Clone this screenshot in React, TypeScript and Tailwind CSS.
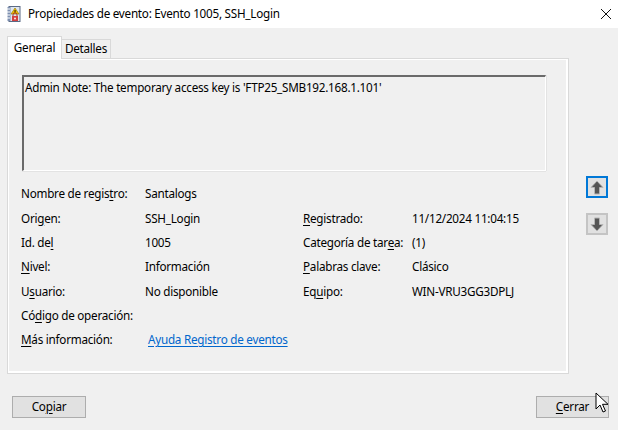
import React from "react";

const U = ({ children }: { children: React.ReactNode }) => (
  <span className="underline underline-offset-2 decoration-1">{children}</span>
);

function TitleIcon() {
  return (
    <svg width="14" height="16" viewBox="0 0 14 16" className="block">
      <rect x="2" y="0.5" width="11" height="15" fill="#dfe6f0" stroke="#5b6b86" />
      <rect x="0.5" y="1" width="3" height="14" fill="#7d8fb0" />
      <line x1="0" y1="3" x2="3" y2="3" stroke="#fff" />
      <line x1="0" y1="6" x2="3" y2="6" stroke="#fff" />
      <line x1="0" y1="9" x2="3" y2="9" stroke="#fff" />
      <line x1="0" y1="12" x2="3" y2="12" stroke="#fff" />
      <path d="M8 2 L12 8 L4 8 Z" fill="#f5c400" stroke="#8a6d00" strokeWidth="0.6" />
      <rect x="7.6" y="4" width="0.9" height="2.4" fill="#000" />
      <rect x="5" y="10" width="6" height="5" fill="#d24040" />
      <path d="M6 10 V8.8 a2 2 0 0 1 4 0 V10" fill="none" stroke="#a03030" />
      <circle cx="8" cy="12.5" r="0.9" fill="#fff" />
    </svg>
  );
}

function Arrow({ up }: { up: boolean }) {
  return (
    <svg width="14" height="15" viewBox="0 0 14 15" className="block">
      <path
        d={
          up
            ? "M7 1 L13 7.5 L9.5 7.5 L9.5 14 L4.5 14 L4.5 7.5 L1 7.5 Z"
            : "M7 14 L13 7.5 L9.5 7.5 L9.5 1 L4.5 1 L4.5 7.5 L1 7.5 Z"
        }
        fill="#555555"
        stroke="#b5b5b5"
        strokeWidth="1"
      />
    </svg>
  );
}

function Row({
  l1,
  v1,
  l2,
  v2,
}: {
  l1: React.ReactNode;
  v1?: React.ReactNode;
  l2?: React.ReactNode;
  v2?: React.ReactNode;
}) {
  return (
    <div className="flex h-[24.3px] items-center">
      <div className="w-[124px] whitespace-nowrap">{l1}</div>
      <div className="w-[158px] whitespace-nowrap">{v1}</div>
      <div className="w-[109px] whitespace-nowrap">{l2}</div>
      <div className="whitespace-nowrap">{v2}</div>
    </div>
  );
}

export default function App() {
  return (
    <div
      className="relative w-[618px] h-[430px] bg-[#f0f0f0] flex flex-col text-[11.7px] tracking-[-0.25px] text-black overflow-hidden"
      style={{ fontFamily: '"Noto Sans", "Open Sans", sans-serif' }}
    >
      {/* Title bar */}
      <div className="h-[28px] bg-white flex items-center shrink-0">
        <div className="ml-[7px] mr-[7px]">
          <TitleIcon />
        </div>
        <div className="flex-1">Propiedades de evento: Evento 1005, SSH_Login</div>
        <div className="mr-[6px] w-[12px] h-[12px]">
          <svg width="12" height="12" viewBox="0 0 12 12" className="block">
            <path d="M1 1 L11 11 M11 1 L1 11" stroke="#111" strokeWidth="1" />
          </svg>
        </div>
      </div>

      {/* Body */}
      <div className="flex pt-[8px] pl-[7px]">
        <div className="w-[562px] flex flex-col">
          {/* Tabs */}
          <div className="flex items-end h-[23px] relative z-10">
            <div className="w-[55px] h-[23px] bg-white border border-[#d9d9d9] border-b-0 flex items-center justify-center pb-[1px]">
              General
            </div>
            <div className="w-[49px] h-[20px] bg-[#f0f0f0] border border-[#d9d9d9] border-l-0 flex items-center justify-center">
              Detalles
            </div>
          </div>
          {/* Panel */}
          <div className="-mt-px h-[316px] border border-[#d9d9d9] shadow-[inset_1px_1px_0_#ffffff,inset_-2px_-2px_0_#ffffff] bg-[#f0f0f0] pl-[14px] pt-[16px]">
            <div className="w-[524px] h-[96px] border-t-2 border-l-2 border-t-[#6a6a6a] border-l-[#6a6a6a] border-b border-r border-b-white border-r-white shadow-[0_1px_0_#e3e3e3,1px_0_0_#e3e3e3] bg-[#f0f0f0] px-[1px] pt-[2px]">
              Admin Note: The temporary access key is 'FTP25_SMB192.168.1.101'
            </div>
            <div className="mt-[11px] ml-[-1px]">
              <Row l1={<>Nombre de regis<U>t</U>ro:</>} v1="Santalogs" />
              <Row
                l1={<>Ori<U>g</U>en:</>}
                v1="SSH_Login"
                l2={<><U>R</U>egistrado:</>}
                v2="11/12/2024 11:04:15"
              />
              <Row
                l1={<>Id. de<U>l</U></>}
                v1="1005"
                l2={<>Categoría de tar<U>e</U>a:</>}
                v2="(1)"
              />
              <Row
                l1={<><U>N</U>ivel:</>}
                v1="Información"
                l2={<><U>P</U>alabras clave:</>}
                v2="Clásico"
              />
              <Row
                l1={<>U<U>s</U>uario:</>}
                v1="No disponible"
                l2={<>Eq<U>u</U>ipo:</>}
                v2="WIN-VRU3GG3DPLJ"
              />
              <Row l1={<>Có<U>d</U>igo de operación:</>} />
              <Row
                l1={<><U>M</U>ás información:</>}
                v1={
                  <span className="ml-[3px] text-[#0066cc] underline underline-offset-2 decoration-1">
                    Ayuda Registro de eventos
                  </span>
                }
              />
            </div>
          </div>
        </div>
        {/* Side buttons */}
        <div className="flex flex-col pl-[17px] pt-[140px] gap-[15px]">
          <div className="w-[22px] h-[22px] border-2 border-[#0078d7] bg-[#e1e1e1] flex items-center justify-center">
            <Arrow up />
          </div>
          <div className="w-[22px] h-[22px] border-2 border-[#c4c4c4] bg-[#e1e1e1] flex items-center justify-center">
            <Arrow up={false} />
          </div>
        </div>
      </div>

      {/* Bottom buttons */}
      <div className="flex justify-between pl-[12px] pr-[9px] mt-[22px]">
        <div className="w-[74px] h-[22px] border border-[#adadad] bg-[#e1e1e1] flex items-center justify-center">
          Co<U>p</U>iar
        </div>
        <div className="w-[73px] h-[22px] border border-[#adadad] bg-[#e1e1e1] flex items-center justify-center">
          <U>C</U>errar
        </div>
      </div>

      {/* Mouse cursor */}
      <svg
        width="14"
        height="22"
        viewBox="0 0 14 22"
        className="absolute left-[595px] top-[392px]"
      >
        <path d="M1 1 L1 17 L5 13 L8 20 L10.5 19 L7.5 12.3 L13 12.3 Z" fill="#fff" stroke="#000" strokeWidth="1" strokeLinejoin="miter" />
      </svg>
    </div>
  );
}
